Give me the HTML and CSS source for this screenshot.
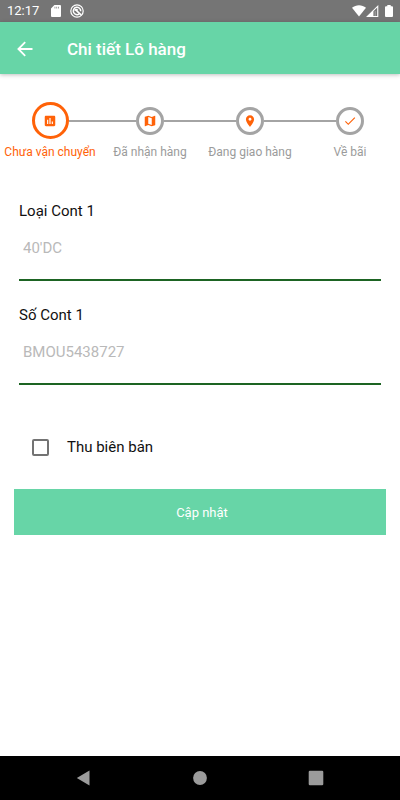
FILE: index.html
```html
<!DOCTYPE html>
<html lang="vi">
<head>
<meta charset="utf-8">
<meta name="viewport" content="width=device-width, initial-scale=1">
<title>Chi tiết Lô hàng</title>
<link rel="stylesheet" href="styles.css">
</head>
<body>
<div class="status-bar">
  <span class="clock">12:17</span>
  <svg class="sd-icon" width="10" height="12" viewBox="0 0 10 12" aria-hidden="true"><path fill="#fff" fill-rule="evenodd" d="M3.4 0H9a1 1 0 0 1 1 1v10a1 1 0 0 1-1 1H1a1 1 0 0 1-1-1V3.4zM3.6 1.800v1.600h.7V1.800zm1.800 0v1.600h.7V1.800zm1.800 0v1.600h.7V1.800z"/></svg>
  <svg width="14" height="14" viewBox="0 0 14 14" fill="none" stroke="#fff" aria-hidden="true"><circle cx="7" cy="7" r="6.200" stroke-width="1.200"/><path stroke-width="1.500" d="M9.300 9.900A3.700 3.700 0 1 1 10.700 7.200"/><path stroke-width="1.600" d="M4.800 6.600c.8-1.300 2-1.300 2.800-.2M6.200 6.300l4.900 4.500"/></svg>
  <div class="status-right">
    <svg width="14" height="12" viewBox="0 0 14 12" aria-hidden="true"><path fill="#fff" d="M7 11.600L0 2.800C4-.7 10-.7 14 2.800z"/></svg>
    <svg class="signal-icon" width="13" height="12" viewBox="0 0 13 12" aria-hidden="true"><path fill="#fff" fill-rule="evenodd" d="M12.300 0v12H0zM7.400 6.300V11h3.800V2.600z"/><path fill="#fff" d="M8.600 6h1.200v5H8.600z" opacity=".3"/></svg>
    <svg width="8" height="12" viewBox="0 0 8 12" aria-hidden="true"><path fill="#fff" d="M2.300 0h3.400v1.200H7a1 1 0 0 1 1 1V11a1 1 0 0 1-1 1H1a1 1 0 0 1-1-1V2.200a1 1 0 0 1 1-1h1.300z"/></svg>
  </div>
</div>
<header class="app-bar">
  <button class="back" type="button" aria-label="Quay lại">
    <svg width="16" height="16" viewBox="0 0 16 16" fill="none" stroke="#fff" stroke-width="1.800" aria-hidden="true"><path d="M15.500 8H2M8.200 1.200L1.400 8l6.800 6.800"/></svg>
  </button>
  <h1>Chi tiết Lô hàng</h1>
</header>
<main>
  <ol class="steps">
    <li class="step current">
      <div class="track"><span class="dot"><svg width="14" height="14" viewBox="0 0 24 24" aria-hidden="true"><path fill="currentColor" d="M19 3H5c-1.100 0-2 .9-2 2v14c0 1.100.9 2 2 2h14c1.100 0 2-.9 2-2V5c0-1.100-.9-2-2-2zM9 17H7v-7h2v7zm4 0h-2V7h2v10zm4 0h-2v-4h2v4z"/></svg></span></div>
      <span class="step-label">Chưa vận chuyển</span>
    </li>
    <li class="step">
      <div class="track"><span class="dot"><svg width="14" height="14" viewBox="0 0 24 24" aria-hidden="true"><path fill="currentColor" d="M20.500 3l-.16.03L15 5.100 9 3 3.360 4.900c-.21.07-.36.25-.36.48V20.500c0 .28.22.5.5.5l.16-.03L9 18.900l6 2.100 5.640-1.900c.21-.07.36-.25.36-.48V3.500c0-.28-.22-.5-.5-.5zM15 19l-6-2.110V5l6 2.110V19z"/></svg></span></div>
      <span class="step-label">Đã nhận hàng</span>
    </li>
    <li class="step">
      <div class="track"><span class="dot"><svg width="14" height="14" viewBox="0 0 24 24" aria-hidden="true"><path fill="currentColor" d="M12 2C8.130 2 5 5.130 5 9c0 5.250 7 13 7 13s7-7.750 7-13c0-3.870-3.130-7-7-7zm0 9.500c-1.380 0-2.500-1.120-2.500-2.500s1.120-2.500 2.500-2.500 2.500 1.120 2.500 2.500-1.120 2.500-2.500 2.500z"/></svg></span></div>
      <span class="step-label">Đang giao hàng</span>
    </li>
    <li class="step">
      <div class="track"><span class="dot"><svg width="14" height="14" viewBox="0 0 24 24" aria-hidden="true"><path fill="currentColor" d="M9 16.170L4.830 12l-1.420 1.410L9 19 21 7l-1.410-1.410z"/></svg></span></div>
      <span class="step-label">Về bãi</span>
    </li>
  </ol>
  <form>
    <div class="field">
      <label for="type">Loại Cont 1</label>
      <input id="type" type="text" placeholder="40'DC">
    </div>
    <div class="field">
      <label for="number">Số Cont 1</label>
      <input id="number" type="text" placeholder="BMOU5438727">
    </div>
    <div class="check">
      <input id="record" type="checkbox">
      <label for="record">Thu biên bản</label>
    </div>
    <button class="submit" type="button">Cập nhật</button>
  </form>
</main>
<nav class="system-nav">
  <button type="button" aria-label="Trở về"><svg width="16" height="16" viewBox="0 0 16 16" aria-hidden="true"><path fill="#9b9b9b" d="M13.500.6v14.800L.8 8z"/></svg></button>
  <button type="button" aria-label="Màn hình chính"><svg width="16" height="16" viewBox="0 0 16 16" aria-hidden="true"><circle cx="8" cy="8" r="6.900" fill="#9b9b9b"/></svg></button>
  <button type="button" aria-label="Ứng dụng gần đây"><svg width="16" height="16" viewBox="0 0 16 16" aria-hidden="true"><rect x=".7" y=".7" width="14.600" height="14.600" rx="1.200" fill="#9b9b9b"/></svg></button>
</nav>
</body>
</html>
```
FILE: styles.css
```css
* {
  box-sizing: border-box;
}

body {
  margin: 0;
  min-height: 100vh;
  display: flex;
  flex-direction: column;
  background: #fff;
  color: #111;
  font-family: Roboto, "Noto Sans", sans-serif;
}

button {
  border: 0;
  padding: 0;
  background: none;
  font: inherit;
}

svg {
  display: block;
}

.status-bar {
  height: 22px;
  padding: 0 7px;
  display: flex;
  align-items: center;
  background: #757575;
  color: #fff;
}

.clock {
  font-size: 13px;
  line-height: 22px;
}

.sd-icon {
  margin: 0 9px 0 12px;
}

.status-right {
  margin-left: auto;
  display: flex;
}

.signal-icon {
  margin-right: 6px;
}

.app-bar {
  height: 52px;
  padding: 2px 17px 0;
  display: flex;
  align-items: center;
  gap: 34px;
  background: #67d5a7;
  color: #fff;
  box-shadow: 0 1px 4px rgba(0, 0, 0, 0.25);
}

.app-bar h1 {
  margin: 0;
  font-size: 17px;
  font-weight: 500;
  line-height: 24px;
}

main {
  flex: 1;
}

.steps {
  margin: 0;
  padding: 28px 0 0;
  display: flex;
  list-style: none;
}

.step {
  flex: 1 1 0;
  display: flex;
  flex-direction: column;
  color: #9b9b9b;
}

.track {
  height: 37px;
  display: flex;
  align-items: center;
}

.track::before,
.track::after {
  content: "";
  flex: 1;
  height: 2px;
  background: #a4a4a4;
}

.step:first-child .track::before,
.step:last-child .track::after {
  background: none;
}

.dot {
  width: 28px;
  height: 28px;
  display: flex;
  align-items: center;
  justify-content: center;
  border: 3px solid #a4a4a4;
  border-radius: 50%;
  color: #ff6208;
}

.current .dot {
  width: 37px;
  height: 37px;
  border-color: #ff6208;
}

.step-label {
  margin-top: 5px;
  font-size: 12px;
  line-height: 16px;
  text-align: center;
  white-space: nowrap;
}

.current .step-label {
  color: #ff6208;
}

form {
  padding: 41px 14px 0;
}

.field {
  margin: 0 5px 24px;
  display: flex;
  flex-direction: column;
}

.field label,
.check label {
  font-size: 15px;
  line-height: 20px;
}

.field input {
  width: 100%;
  height: 60px;
  padding: 0 4px 4px;
  border: 0;
  border-bottom: 2px solid #1d6423;
  border-radius: 0;
  outline: 0;
  background: none;
  color: #111;
  font: 15px/20px Roboto, "Noto Sans", sans-serif;
}

.field input::placeholder {
  color: #b9b9b9;
  opacity: 1;
}

.check {
  margin: 52px 0 32px;
  padding-left: 18px;
  display: flex;
  align-items: center;
  gap: 18px;
}

.check input {
  appearance: none;
  width: 17px;
  height: 17px;
  margin: 0;
  border: 2px solid #737373;
  border-radius: 2px;
  background: #fff;
}

.check input:checked {
  background: #67d5a7;
}

.submit {
  display: block;
  width: 100%;
  height: 46px;
  padding-left: 4px;
  background: #67d5a7;
  color: #fff;
  font-size: 13px;
}

.system-nav {
  height: 44px;
  padding: 0 26px;
  display: flex;
  background: #000;
}

.system-nav button {
  flex: 1;
  display: flex;
  align-items: center;
  justify-content: center;
}
```
